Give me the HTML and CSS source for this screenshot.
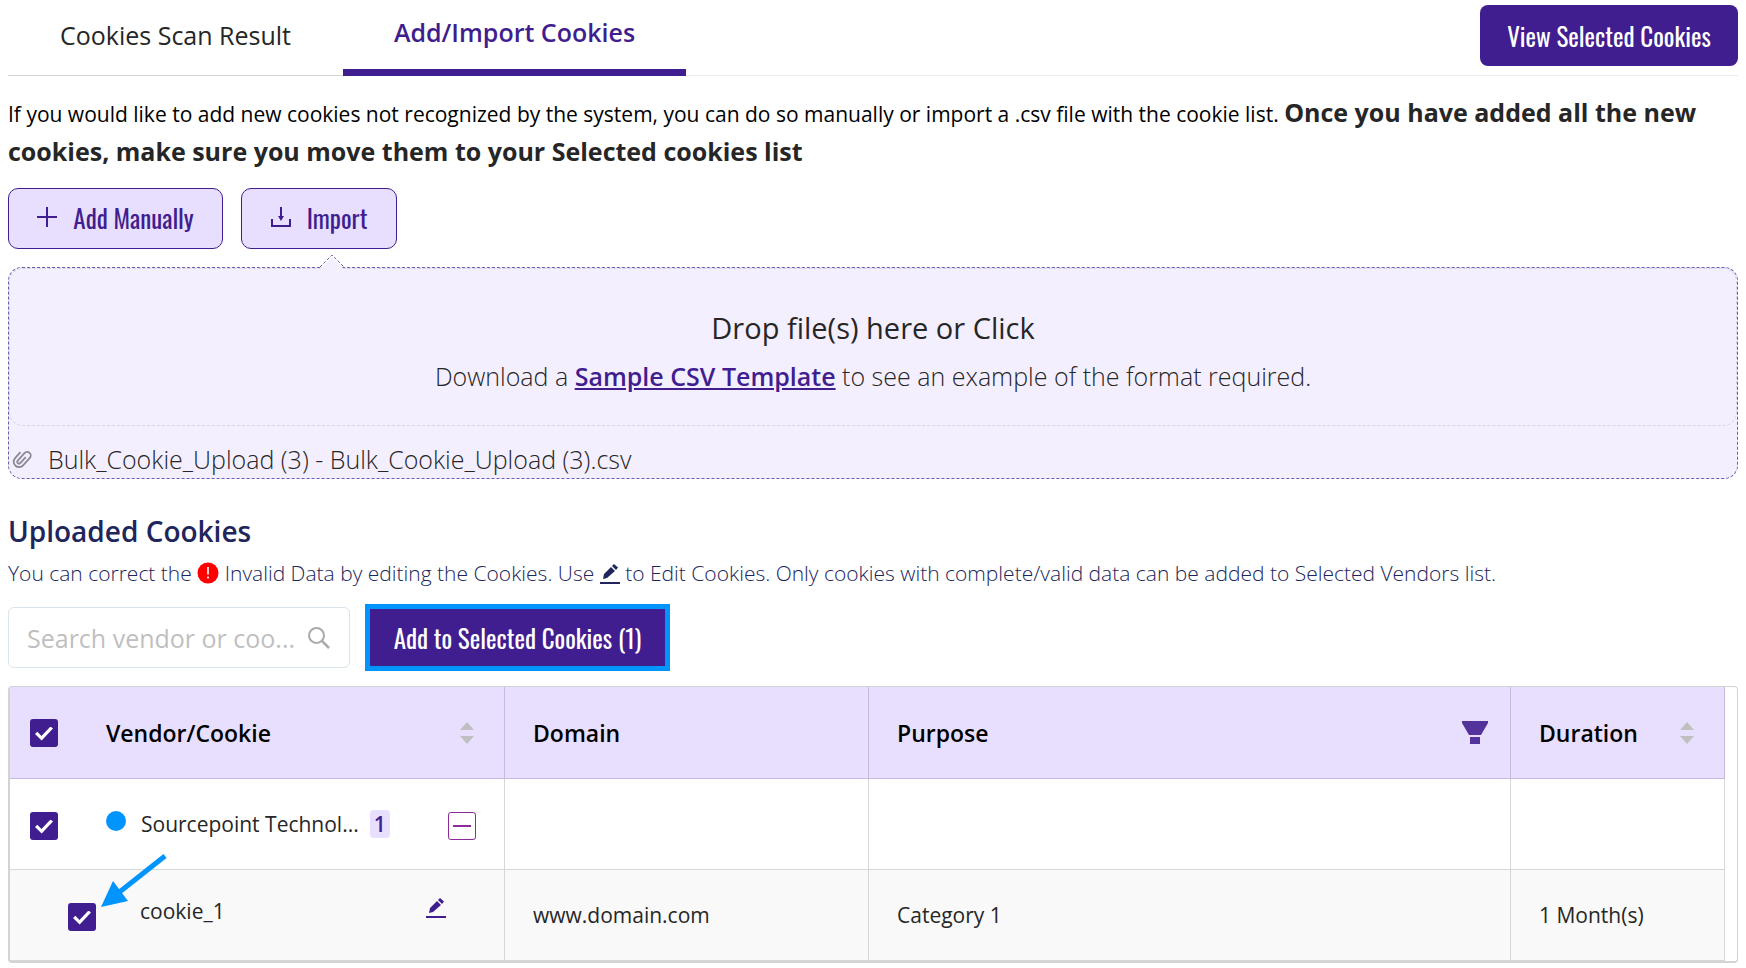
FILE: index.html
```html
<!DOCTYPE html>
<html lang="en">
<head>
    <meta charset="UTF-8">
    <meta name="viewport" content="width=device-width, initial-scale=1.0">
    <title>Add/Import Cookies</title>
    <link rel="stylesheet" href="styles.css">
</head>
<body>
    <div class="container">
        <div class="topbar">
            <div class="tabs">
                <button class="tab" type="button">Cookies Scan Result</button>
                <button class="tab active" type="button">Add/Import Cookies</button>
            </div>
            <button class="button primary" type="button">View Selected Cookies</button>
        </div>

        <p class="intro">If you would like to add new cookies not recognized by the system, you can do so manually or import a .csv file with the cookie list. <strong>Once you have added all the new cookies, make sure you move them to your Selected cookies list</strong></p>

        <div class="actions">
            <button class="button light" type="button">
                <svg width="20" height="20" viewBox="0 0 20 20"><path d="M10 0v20M0 10h20" fill="none" stroke="currentColor" stroke-width="2"/></svg>
                Add Manually
            </button>
            <button class="button light import" type="button">
                <svg width="20" height="20" viewBox="0 0 20 20"><path d="M1 12v7h18v-7M10 0v10" fill="none" stroke="currentColor" stroke-width="2"/><path d="M7 9h6l-3 5z" fill="currentColor"/></svg>
                Import
            </button>
        </div>

        <div class="upload">
            <svg class="pointer" width="26" height="15" viewBox="0 0 26 15"><path d="M1 15L13 3l12 12z" fill="#f4efff"/><path d="M1 13L13 1l12 12" fill="none" stroke="#6a5fae" stroke-dasharray="3 2"/></svg>
            <div class="dropzone">
                <h3>Drop file(s) here or Click</h3>
                <p>Download a <a href="#">Sample CSV Template</a> to see an example of the format required.</p>
            </div>
            <div class="file">
                <svg width="22" height="24" viewBox="0 0 22 24"><path transform="rotate(42 11 12)" d="M12.500 8v8a1.800 1.800 0 0 1-3.600 0V6a3.600 3.600 0 0 1 7.200 0v10a5.400 5.400 0 0 1-10.800 0V8" fill="none" stroke="#8c8893" stroke-width="1.800"/></svg>
                <span>Bulk_Cookie_Upload (3) - Bulk_Cookie_Upload (3).csv</span>
            </div>
        </div>

        <h2 class="title">Uploaded Cookies</h2>
        <p class="hint">You can correct the
            <svg width="22" height="22" viewBox="0 0 22 22"><circle cx="11" cy="11" r="10.500" fill="#f00"/><path d="M11 5v7.500M11 14.500v2" stroke="#fff" stroke-width="1.600"/></svg>
            Invalid Data by editing the Cookies. Use
            <svg width="20" height="20" viewBox="0 0 20 20"><path d="M3 15l1-5 7-7 4 4-8 7zM12 2l2-2 4 3.500-2 2.500zM0 18h20v2H0z" fill="currentColor"/></svg>
            to Edit Cookies. Only cookies with complete/valid data can be added to Selected Vendors list.</p>

        <div class="toolbar">
            <div class="search">
                <input type="text" id="search" aria-label="Search vendor or cookie" placeholder="Search vendor or coo...">
                <svg width="22" height="22" viewBox="0 0 22 22"><circle cx="8.500" cy="8.500" r="7.500" fill="none" stroke="#aaa" stroke-width="2"/><path d="M14 14l7 7" stroke="#aaa" stroke-width="2.500"/></svg>
            </div>
            <button class="button primary highlight" type="button">Add to Selected Cookies (1)</button>
        </div>

        <div class="table-wrap">
            <table>
                <colgroup>
                    <col class="col-vendor">
                    <col class="col-domain">
                    <col>
                    <col class="col-duration">
                </colgroup>
                <thead>
                    <tr>
                        <th>
                            <div class="cell vendor">
                                <input type="checkbox" aria-label="Select all" checked>
                                <span class="label">Vendor/Cookie</span>
                                <svg class="sort" width="14" height="22" viewBox="0 0 14 22"><path d="M7 0l7 8H0zM7 22l7-8H0z" fill="#bfbfbf"/></svg>
                            </div>
                        </th>
                        <th>Domain</th>
                        <th>
                            <div class="cell">
                                <span class="label">Purpose</span>
                                <svg class="filter" width="26" height="24" viewBox="0 0 26 24"><path d="M0 0h26v2l-7 12H7L0 2zM8 16h10v7H8z" fill="#53329b"/></svg>
                            </div>
                        </th>
                        <th>
                            <div class="cell">
                                <span class="label">Duration</span>
                                <svg class="sort" width="14" height="22" viewBox="0 0 14 22"><path d="M7 0l7 8H0zM7 22l7-8H0z" fill="#bfbfbf"/></svg>
                            </div>
                        </th>
                    </tr>
                </thead>
                <tbody>
                    <tr>
                        <td>
                            <div class="cell vendor">
                                <input type="checkbox" id="vendor" checked>
                                <span class="dot"></span>
                                <label for="vendor">Sourcepoint Technol...</label>
                                <span class="badge">1</span>
                                <button class="collapse" type="button" aria-label="Collapse"></button>
                            </div>
                        </td>
                        <td></td>
                        <td></td>
                        <td></td>
                    </tr>
                    <tr class="child">
                        <td>
                            <div class="cell vendor">
                                <input type="checkbox" id="cookie" checked>
                                <label for="cookie">cookie_1</label>
                                <button class="edit" type="button" aria-label="Edit">
                                    <svg width="20" height="20" viewBox="0 0 20 20"><path d="M3 15l1-5 7-7 4 4-8 7zM12 2l2-2 4 3.500-2 2.500zM0 18h20v2H0z" fill="currentColor"/></svg>
                                </button>
                                <svg class="arrow" width="66" height="54" viewBox="0 0 66 54"><path d="M64 2L16 40" stroke="#0094ff" stroke-width="5"/><path d="M0 53l12-26 15 20z" fill="#0094ff"/></svg>
                            </div>
                        </td>
                        <td>www.domain.com</td>
                        <td>Category 1</td>
                        <td>1 Month(s)</td>
                    </tr>
                </tbody>
            </table>
        </div>
    </div>
</body>
</html>
```
FILE: styles.css
```css
* {
    box-sizing: border-box;
}

body {
    margin: 0;
    background-color: #fff;
    color: #262626;
    font-family: "Open Sans", sans-serif;
    font-size: 21px;
}

h2, h3, p {
    margin: 0;
}

svg {
    flex: none;
}

.container {
    padding: 0 8px;
}

.topbar {
    display: flex;
    justify-content: space-between;
    height: 76px;
    padding-top: 5px;
    border-bottom: 1px solid #ececec;
}

.tabs {
    display: flex;
    height: 71px;
}

.tab {
    width: 335px;
    background: none;
    border: none;
    border-bottom: 1px solid #d5d5d5;
    padding: 0 0 10px;
    color: #262626;
    font-family: inherit;
    font-size: 25px;
}

.tab.active {
    width: 343px;
    border-bottom: 7px solid #411e8f;
    color: #411e8f;
    font-weight: 600;
}

.button {
    display: flex;
    align-items: center;
    justify-content: center;
    gap: 16px;
    height: 61px;
    border: none;
    border-radius: 8px;
    font-family: "Oswald", "Liberation Sans Narrow", "Open Sans", sans-serif;
    font-size: 25px;
    font-weight: 400;
    white-space: nowrap;
}

.primary {
    width: 258px;
    background-color: #411e8f;
    color: #fff;
}

.light {
    width: 215px;
    padding-bottom: 4px;
    background-color: #e8dfff;
    border: 1px solid #411e8f;
    border-radius: 10px;
    color: #411e8f;
}

.light.import {
    width: 156px;
}

.intro {
    margin-top: 18px;
    color: #000;
    font-size: 21px;
    line-height: 37px;
}

.intro strong {
    color: #262626;
    font-size: 25px;
    font-weight: 700;
}

.actions {
    display: flex;
    gap: 18px;
    margin-top: 16px;
}

.upload {
    position: relative;
    margin-top: 18px;
    background-color: #f4efff;
    border: 1px dashed #6a5fae;
    border-radius: 14px;
}

.pointer {
    position: absolute;
    left: 310px;
    top: -14px;
}

.dropzone {
    height: 158px;
    padding-top: 39px;
    border: 1px dashed #d9d3e3;
    border-radius: 14px;
    text-align: center;
}

.dropzone h3 {
    font-size: 29px;
    font-weight: 500;
    line-height: 40px;
}

.dropzone p {
    margin-top: 8px;
    font-size: 25px;
    font-weight: 300;
    line-height: 40px;
}

.dropzone a {
    color: #411e8f;
    font-weight: 600;
}

.file {
    display: flex;
    align-items: center;
    gap: 15px;
    height: 52px;
    padding: 14px 0 0 2px;
    font-size: 25px;
    font-weight: 300;
}

.title {
    margin-top: 32px;
    color: #20265b;
    font-size: 28px;
    font-weight: 600;
    line-height: 40px;
}

.hint {
    margin-top: 6px;
    color: #20265b;
    font-size: 21px;
    font-weight: 300;
    line-height: 32px;
}

.hint svg {
    vertical-align: -3px;
}

.toolbar {
    display: flex;
    align-items: center;
    gap: 15px;
    margin-top: 15px;
}

.search {
    display: flex;
    align-items: center;
    width: 342px;
    height: 61px;
    padding: 0 19px 0 18px;
    border: 1px solid #dbe4ea;
    border-radius: 6px;
}

.search input {
    flex: 1;
    min-width: 0;
    padding: 0;
    border: none;
    outline: none;
    font-family: inherit;
    font-size: 25px;
}

.search input::placeholder {
    color: #bfbfbf;
}

.button.highlight {
    width: 305px;
    height: 67px;
    border: 5px solid #0094ff;
    border-radius: 0;
}

.table-wrap {
    margin-top: 15px;
    padding-right: 12px;
    border: 1px solid #d3d3d3;
    border-width: 1px 1px 2px 2px;
    border-radius: 4px;
}

table {
    width: 100%;
    table-layout: fixed;
    border-collapse: separate;
    border-spacing: 0;
}

.col-vendor {
    width: 495px;
}

.col-domain {
    width: 364px;
}

.col-duration {
    width: 214px;
}

th, td {
    height: 91px;
    padding: 0 28px;
    border-right: 1px solid #d5d7da;
    border-bottom: 1px solid #d5d7da;
    font-size: 21px;
    text-align: left;
}

th {
    height: 92px;
    padding-right: 22px;
    background-color: #e8dfff;
    border-color: #c4b9e0;
    color: #000;
    font-size: 23px;
    font-weight: 600;
}

th:first-child, td:first-child {
    padding-left: 20px;
}

.child td {
    background-color: #f9f9f9;
}

.cell {
    display: flex;
    align-items: center;
    position: relative;
}

.cell .label {
    flex: 1;
}

.vendor .label {
    margin-left: 48px;
}

.sort {
    margin-right: 8px;
}

input[type="checkbox"] {
    appearance: none;
    display: grid;
    place-content: center;
    flex: none;
    width: 28px;
    height: 28px;
    margin: 0;
    background-color: #411e8f;
    border-radius: 3px;
}

td input[type="checkbox"] {
    margin-top: 3px;
}

input[type="checkbox"]:checked::before {
    content: "";
    width: 18px;
    height: 14px;
    margin-top: 2px;
    background-color: #fff;
    clip-path: polygon(0 53%, 13% 38%, 36% 67%, 86% 0, 100% 14%, 37% 100%);
}

.dot {
    width: 20px;
    height: 20px;
    margin: 0 15px 6px 48px;
    border-radius: 50%;
    background-color: #0094ff;
}

.badge {
    margin-left: 11px;
    padding: 0 4px;
    background-color: #e8dfff;
    border-radius: 4px;
    color: #411e8f;
    font-weight: 600;
    line-height: 28px;
}

.collapse {
    display: grid;
    place-content: center;
    width: 28px;
    height: 28px;
    margin: 3px 0 0 auto;
    padding: 0;
    background: #fff;
    border: 1px solid #8e2a9b;
    border-radius: 3px;
}

.collapse::before {
    content: "";
    width: 18px;
    height: 2px;
    background-color: #8e2a9b;
}

.child .vendor {
    padding-left: 38px;
}

.child label {
    margin: 0 0 8px 44px;
}

.edit {
    display: flex;
    margin: 0 30px 14px auto;
    padding: 0;
    background: none;
    border: none;
    color: #411e8f;
}

.arrow {
    position: absolute;
    left: 71px;
    top: -43px;
}
```
